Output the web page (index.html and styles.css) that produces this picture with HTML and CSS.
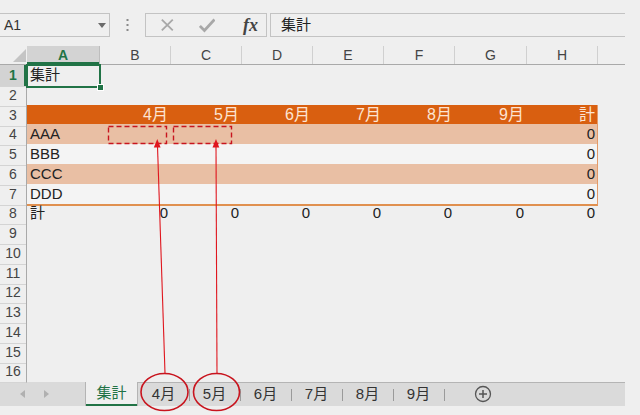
FILE: index.html
```html
<!DOCTYPE html>
<html lang="ja">
<head>
    <meta charset="UTF-8">
    <title>集計 - Excel</title>
    <link rel="stylesheet" href="styles.css">
</head>
<body>
    <div class="app">
        <div class="formula-bar">
            <div class="name-box">
                <span>A1</span>
                <svg class="caret" width="8" height="5" viewBox="0 0 8 5"><path d="M0 0h8L4 5z" fill="#6b6b6b"/></svg>
            </div>
            <svg class="grip" width="3" height="12" viewBox="0 0 3 12">
                <rect x="0.5" y="0" width="2" height="2" fill="#8a8a8a"/>
                <rect x="0.5" y="5" width="2" height="2" fill="#8a8a8a"/>
                <rect x="0.5" y="10" width="2" height="2" fill="#8a8a8a"/>
            </svg>
            <div class="fx-buttons">
                <svg width="16" height="16" viewBox="0 0 16 16"><path d="M2 2l12 12M14 2L2 14" stroke="#a8a8a8" stroke-width="2"/></svg>
                <svg width="18" height="16" viewBox="0 0 18 16"><path d="M1 9l5 5L17 2" stroke="#a8a8a8" stroke-width="3" fill="none"/></svg>
                <span class="fx">fx</span>
            </div>
            <div class="formula-input">集計</div>
        </div>

        <div class="sheet">
            <div class="row col-head">
                <div class="corner"><svg width="13" height="13" viewBox="0 0 13 13"><path d="M13 0v13H0z" fill="#c4c4c4"/></svg></div>
                <div class="ch active">A</div>
                <div class="ch">B</div>
                <div class="ch">C</div>
                <div class="ch">D</div>
                <div class="ch">E</div>
                <div class="ch">F</div>
                <div class="ch">G</div>
                <div class="ch">H</div>
                <div class="ch last"></div>
            </div>

            <div class="row">
                <div class="rh active">1</div>
                <div class="cell selected">集計</div>
            </div>
            <div class="row">
                <div class="rh">2</div>
            </div>
            <div class="row">
                <div class="rh">3</div>
                <div class="trow head">
                    <div class="cell"></div>
                    <div class="cell num">4月</div>
                    <div class="cell num">5月</div>
                    <div class="cell num">6月</div>
                    <div class="cell num">7月</div>
                    <div class="cell num">8月</div>
                    <div class="cell num">9月</div>
                    <div class="cell num">計</div>
                </div>
            </div>
            <div class="row">
                <div class="rh">4</div>
                <div class="trow band">
                    <div class="cell">AAA</div>
                    <div class="cell"></div><div class="cell"></div><div class="cell"></div>
                    <div class="cell"></div><div class="cell"></div><div class="cell"></div>
                    <div class="cell num">0</div>
                </div>
            </div>
            <div class="row">
                <div class="rh">5</div>
                <div class="trow plain">
                    <div class="cell">BBB</div>
                    <div class="cell"></div><div class="cell"></div><div class="cell"></div>
                    <div class="cell"></div><div class="cell"></div><div class="cell"></div>
                    <div class="cell num">0</div>
                </div>
            </div>
            <div class="row">
                <div class="rh">6</div>
                <div class="trow band">
                    <div class="cell">CCC</div>
                    <div class="cell"></div><div class="cell"></div><div class="cell"></div>
                    <div class="cell"></div><div class="cell"></div><div class="cell"></div>
                    <div class="cell num">0</div>
                </div>
            </div>
            <div class="row">
                <div class="rh">7</div>
                <div class="trow plain last">
                    <div class="cell">DDD</div>
                    <div class="cell"></div><div class="cell"></div><div class="cell"></div>
                    <div class="cell"></div><div class="cell"></div><div class="cell"></div>
                    <div class="cell num">0</div>
                </div>
            </div>
            <div class="row">
                <div class="rh">8</div>
                <div class="cell">計</div>
                <div class="cell num">0</div>
                <div class="cell num">0</div>
                <div class="cell num">0</div>
                <div class="cell num">0</div>
                <div class="cell num">0</div>
                <div class="cell num">0</div>
                <div class="cell num">0</div>
            </div>
            <div class="row"><div class="rh">9</div></div>
            <div class="row"><div class="rh">10</div></div>
            <div class="row"><div class="rh">11</div></div>
            <div class="row"><div class="rh">12</div></div>
            <div class="row"><div class="rh">13</div></div>
            <div class="row"><div class="rh">14</div></div>
            <div class="row"><div class="rh">15</div></div>
            <div class="row"><div class="rh">16</div></div>
        </div>

        <div class="tab-bar">
            <div class="tab-nav">
                <svg width="5" height="8" viewBox="0 0 5 8"><path d="M5 0v8L0 4z" fill="#b0b0b0"/></svg>
                <svg width="5" height="8" viewBox="0 0 5 8"><path d="M0 0v8l5-4z" fill="#b0b0b0"/></svg>
            </div>
            <div class="tabs">
                <div class="tab current">集計</div>
                <div class="tab">4月</div>
                <div class="tab">5月</div>
                <div class="tab">6月</div>
                <div class="tab">7月</div>
                <div class="tab">8月</div>
                <div class="tab">9月</div>
                <div class="add-sheet">
                    <svg width="18" height="18" viewBox="0 0 18 18">
                        <circle cx="9" cy="9" r="7.5" fill="none" stroke="#555" stroke-width="1.3"/>
                        <path d="M9 5v8M5 9h8" stroke="#555" stroke-width="1.5"/>
                    </svg>
                </div>
            </div>
        </div>

        <!-- annotation drawn over the sheet -->
        <svg class="annot" width="640" height="415" viewBox="0 0 640 415">
            <g fill="none" stroke="#c8141e" stroke-width="1.4" stroke-dasharray="5 3">
                <rect x="108.5" y="126.5" width="58" height="17"/>
                <rect x="173.5" y="126.5" width="58" height="17"/>
            </g>
            <g stroke="#e0161e" stroke-width="1.1">
                <line x1="157.5" y1="146" x2="165" y2="373"/>
                <line x1="216" y1="146" x2="217" y2="373"/>
            </g>
            <g fill="#e0161e">
                <path d="M157.3 139l3.3 8.5h-6.8z"/>
                <path d="M216 139l3.3 8.5h-6.8z"/>
            </g>
            <g fill="none" stroke="#c8141e" stroke-width="1.6">
                <ellipse cx="164.5" cy="392" rx="23.5" ry="18.5"/>
                <ellipse cx="216.5" cy="392" rx="23" ry="18.5"/>
            </g>
        </svg>
    </div>
</body>
</html>
```

FILE: styles.css
```css
body {
    margin: 0;
    background: #efefef;
    font-family: "Liberation Sans", "Noto Sans CJK JP", sans-serif;
    color: #222;
}
.app {
    position: relative;
    width: 640px;
    height: 415px;
    overflow: hidden;
    --cols: 27px 73px 71px 71px 71px 71px 71px 72px 71px 27px;
}

/* formula bar */
.formula-bar {
    height: 46px;
    box-sizing: border-box;
    padding-top: 13px;
    display: flex;
    align-items: flex-start;
}
.name-box {
    width: 110px;
    height: 24px;
    box-sizing: border-box;
    border: 1px solid #c3c3c3;
    border-left: none;
    display: flex;
    align-items: center;
    justify-content: space-between;
    padding: 0 3px 0 4px;
    font-size: 14px;
    color: #333;
}
.grip {
    margin: 6px 16px 0 16px;
}
.fx-buttons {
    width: 122px;
    height: 24px;
    box-sizing: border-box;
    border: 1px solid #c3c3c3;
    display: flex;
    align-items: center;
    padding: 0 8px 0 14px;
    gap: 22px;
}
.fx-buttons svg:nth-child(2) {
    margin-left: 2px;
}
.fx {
    font-family: "Liberation Serif", serif;
    font-style: italic;
    font-weight: bold;
    font-size: 18px;
    color: #444;
    margin-left: 6px;
}
.formula-input {
    margin-left: 3px;
    width: 355px;
    height: 24px;
    box-sizing: border-box;
    border: 1px solid #c3c3c3;
    border-right: none;
    padding: 1px 10px;
    font-size: 15px;
    line-height: 20px;
    color: #222;
}

/* sheet grid */
.sheet {
    width: 625px;
}
.row {
    display: grid;
    grid-template-columns: var(--cols);
    height: 19.75px;
}
.col-head {
    height: 19px;
    box-sizing: border-box;
    border-bottom: 1px solid #a9a9a9;
}
.corner {
    display: flex;
    justify-content: flex-end;
    align-items: flex-end;
    padding: 0 1px 2px 0;
}
.ch {
    font-size: 14px;
    color: #444;
    text-align: center;
    line-height: 18px;
    border-right: 1px solid #d0d0d0;
}
.ch.active {
    background: #d3d3d3;
    color: #217346;
    font-weight: bold;
    box-shadow: inset 0 -2px 0 #217346;
    border-right-color: #bdbdbd;
}
.ch.last {
    border-right: none;
}
.rh {
    font-size: 14px;
    color: #444;
    text-align: center;
    line-height: 21px;
    box-sizing: border-box;
    border-right: 1px solid #a9a9a9;
    border-bottom: 1px solid #d4d4d4;
}
.rh.active {
    background: #d3d3d3;
    color: #217346;
    font-weight: bold;
    box-shadow: inset -2px 0 0 #217346;
}
.cell {
    font-size: 15px;
    padding: 0 3px;
    line-height: 20px;
    white-space: nowrap;
    overflow: visible;
}
.cell.num {
    text-align: right;
    padding-right: 3px;
}
.cell.selected {
    position: relative;
    outline: 2px solid #217346;
    outline-offset: -1px;
    z-index: 1;
}
.cell.selected::after {
    content: "";
    position: absolute;
    right: -4px;
    bottom: -4px;
    width: 5px;
    height: 5px;
    background: #217346;
    border: 1px solid #fff;
}

/* formatted table */
.trow {
    grid-column: 2 / 10;
    display: grid;
    grid-template-columns: 73px 71px 71px 71px 71px 71px 72px 71px;
    box-sizing: border-box;
    border-bottom: 1px solid #e39a68;
    border-right: 1px solid #e39a68;
}
.trow .cell {
    line-height: 19px;
}
.trow.head {
    background: #d95f10;
    border-bottom-color: #d95f10;
    color: #fde4d2;
}
.trow.head .cell {
    font-size: 16px;
}
.trow.band {
    background: #e9bfa4;
}
.trow.plain {
    background: #f4f4f4;
}
.trow.last {
    border-bottom: 2px solid #e0904f;
}

/* sheet tabs */
.tab-bar {
    margin-top: 0.75px;
    width: 625px;
    height: 24px;
    display: flex;
    background: #dadada;
}
.tab-nav {
    width: 85px;
    display: flex;
    align-items: center;
    gap: 19px;
    padding-left: 20px;
    box-sizing: border-box;
}
.tabs {
    flex: 1;
    display: flex;
    align-items: stretch;
    border-top: 1px solid #b4b4b4;
}
.tab {
    width: 51px;
    font-size: 15px;
    color: #333;
    text-align: center;
    line-height: 22px;
    position: relative;
}
.tab + .tab::before {
    content: "";
    position: absolute;
    left: 0;
    top: 6px;
    height: 12px;
    border-left: 1px solid #9a9a9a;
}
.tab.current {
    width: 53px;
    box-sizing: border-box;
    background: #efefef;
    color: #217346;
    margin-top: -1px;
    border-left: 1px solid #b4b4b4;
    border-right: 1px solid #b4b4b4;
    box-shadow: inset 0 -2px 0 #217346;
}
.tab.current + .tab::before {
    display: none;
}
.add-sheet {
    position: relative;
    padding-left: 30px;
    display: flex;
    align-items: center;
}
.add-sheet::before {
    content: "";
    position: absolute;
    left: 0;
    top: 6px;
    height: 12px;
    border-left: 1px solid #9a9a9a;
}

.annot {
    position: absolute;
    left: 0;
    top: 0;
    pointer-events: none;
}
```
